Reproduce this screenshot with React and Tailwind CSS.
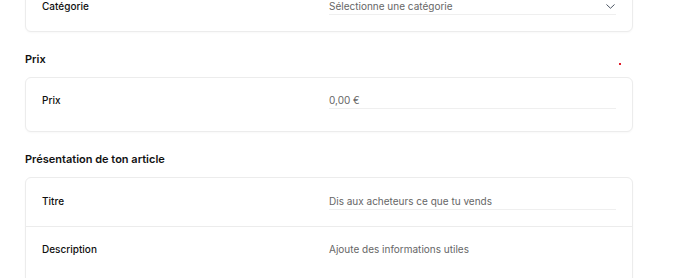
const font = { fontFamily: 'Inter, "Noto Sans", sans-serif' };

function Chevron() {
  return (
    <svg width="9" height="5" viewBox="0 0 9 5" fill="none" className="text-[#4b5563]">
      <path d="M0.75 0.75l3.75 3.5 3.75-3.5" stroke="currentColor" strokeWidth="1" strokeLinecap="round" strokeLinejoin="round" />
    </svg>
  );
}

function Field({ label, placeholder, select, pt = 'pt-[14px]', pb = 'pb-4', underline = true }) {
  return (
    <div className={`grid grid-cols-2 px-4 ${pt} ${pb}`}>
      <div className="text-[10px] leading-4 font-medium text-[#0f0f0f]">{label}</div>
      <div className={`flex items-start justify-between ${underline ? 'border-b border-[#efefef]' : ''}`}>
        <span className="text-[10px] leading-4 text-[#666]">{placeholder}</span>
        {select && (
          <span className="pt-[6px] pr-px leading-none">
            <Chevron />
          </span>
        )}
      </div>
    </div>
  );
}

function Card({ children }) {
  return (
    <div className="rounded-md border border-[#ececec] bg-white shadow-[0_1px_2px_rgba(0,0,0,0.03)]">
      {children}
    </div>
  );
}

function Section({ title, children }) {
  return (
    <section>
      {title && (
        <h2 className="mb-[10px] text-[11px] leading-4 font-semibold text-[#111]">{title}</h2>
      )}
      {children}
    </section>
  );
}

export default function App() {
  return (
    <div className="h-[278px] w-[690px] overflow-hidden bg-white" style={font}>
      <div className="relative -mt-[17px] flex w-[608px] flex-col gap-[19px] pl-[25px] box-content">
        <Section>
          <Card>
            <Field label="Catégorie" placeholder="Sélectionne une catégorie" select />
          </Card>
        </Section>

        <Section title="Prix">
          <Card>
            <Field label="Prix" placeholder="0,00 €" pb="pb-[22px]" />
          </Card>
        </Section>

        <Section title="Présentation de ton article">
          <Card>
            <Field label="Titre" placeholder="Dis aux acheteurs ce que tu vends" pt="pt-[15px]" />
            <div className="border-t border-[#ececec]">
              <Field label="Description" placeholder="Ajoute des informations utiles" underline={false} pt="pt-[14px]" pb="pb-8" />
            </div>
          </Card>
        </Section>

        <span className="absolute left-[619px] top-[80px] h-[2px] w-[2px] bg-[#e11d2a]" />
      </div>
    </div>
  );
}
